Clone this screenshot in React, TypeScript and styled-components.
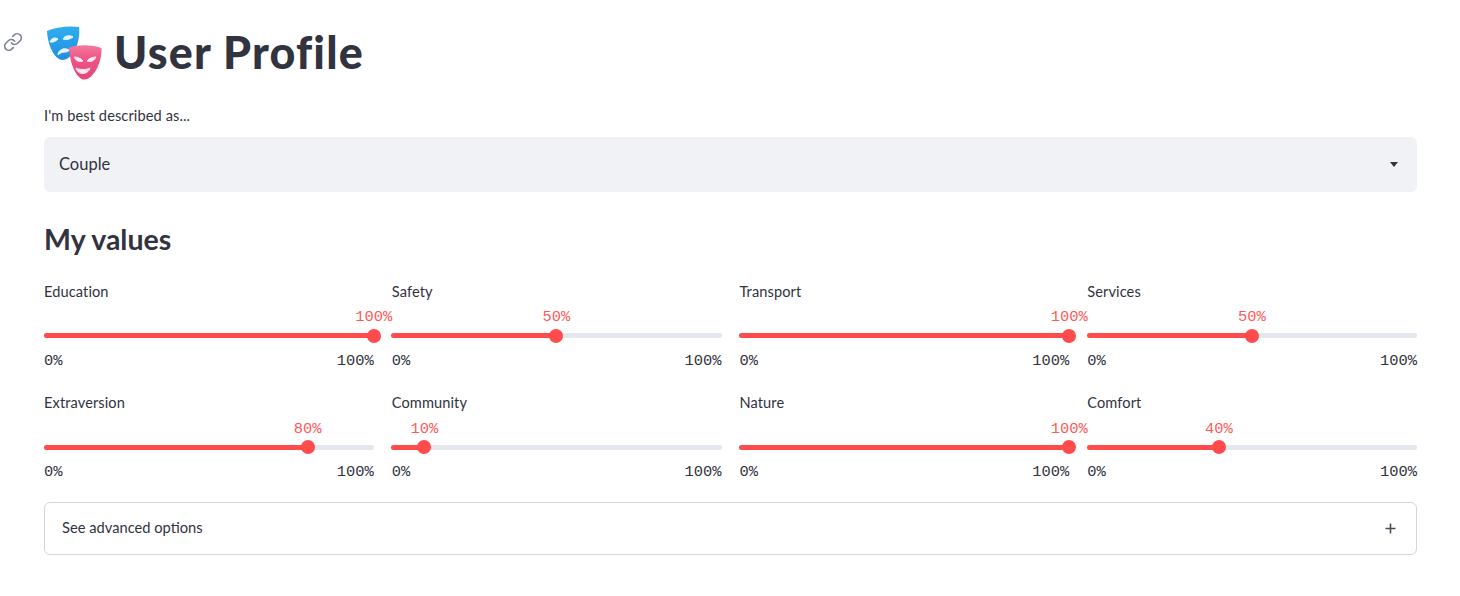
import * as React from "react";
import styled, { createGlobalStyle } from "styled-components";

const GlobalStyle = createGlobalStyle`
  html, body {
    margin: 0;
    padding: 0;
    background: #fff;
    color: #31333f;
    font-family: "Lato", "Noto Sans", sans-serif;
  }
`;

const Page = styled.main`
  position: relative;
  width: 1460px;
  height: 596px;
  box-sizing: border-box;
  padding: 20px 43px 0 44px;
  overflow: hidden;
`;

const TitleRow = styled.div`
  position: relative;
  display: flex;
  align-items: center;
  gap: 10px;
  height: 62px;
`;

const AnchorLink = styled.a`
  position: absolute;
  left: -41px;
  top: 12px;
  display: flex;
  color: #808495;
`;

const EmojiSlot = styled.span`
  display: flex;
  margin-top: 6px;
`;

const Title = styled.h1`
  margin: 2px 0 0;
  font-size: 44.8px;
  line-height: 62px;
  font-weight: 900;
  letter-spacing: 1.2px;
`;

const FieldLabel = styled.label`
  display: block;
  margin-top: 24px;
  height: 20px;
  font-size: 14.6px;
  line-height: 20px;
  letter-spacing: 0.1px;
`;

const SelectBox = styled.div`
  display: flex;
  align-items: center;
  justify-content: space-between;
  height: 55px;
  box-sizing: border-box;
  margin-top: 11px;
  padding: 0 19px 2px 15px;
  border-radius: 6px;
  background: #f0f2f6;
  font-size: 16.5px;
`;

const Caret = styled.span`
  width: 0;
  height: 0;
  margin-top: 2px;
  border-left: 4px solid transparent;
  border-right: 4px solid transparent;
  border-top: 5px solid #31333f;
`;

const SectionHeading = styled.h2`
  margin: 27px 0 0;
  height: 40px;
  font-size: 28.5px;
  line-height: 40px;
  font-weight: 700;
`;

const SliderGrid = styled.div`
  display: grid;
  grid-template-columns: repeat(4, 1fr);
  column-gap: 18px;
  row-gap: 21.4px;
  margin-top: 23px;
`;

const SliderCell = styled.div`
  height: 90px;
`;

const SliderLabel = styled.div`
  height: 20px;
  font-size: 14.6px;
  line-height: 20px;
  letter-spacing: 0.1px;
`;

const Track = styled.div`
  position: relative;
  height: 5px;
  margin: 31.2px 0 0 -0.5px;
  border-radius: 3px;
  background: #e4e7ee;
`;

const Fill = styled.div<{ $pct: number }>`
  height: 100%;
  width: ${(p) => p.$pct}%;
  border-radius: 3px;
  background: #ff4b4b;
`;

const Thumb = styled.div<{ $pct: number }>`
  position: absolute;
  left: ${(p) => p.$pct}%;
  top: 50%;
  width: 14px;
  height: 14px;
  border-radius: 50%;
  background: #ff4b4b;
  transform: translate(-50%, -50%);
`;

const ThumbValue = styled.div<{ $pct: number }>`
  position: absolute;
  left: ${(p) => p.$pct}%;
  bottom: 11px;
  transform: translateX(-50%);
  font-family: "Liberation Mono", monospace;
  font-size: 15.4px;
  line-height: 20px;
  color: #ff5a5a;
`;

const Range = styled.div`
  display: flex;
  justify-content: space-between;
  margin-top: 12.8px;
  font-family: "Liberation Mono", monospace;
  font-size: 15.4px;
  line-height: 20px;
`;

const Expander = styled.div`
  display: flex;
  align-items: center;
  justify-content: space-between;
  height: 53px;
  box-sizing: border-box;
  margin-top: 18.6px;
  padding: 0 20px 3px 17px;
  border: 1px solid rgba(49, 51, 63, 0.2);
  border-radius: 6px;
  font-size: 14.7px;
`;

const PlusSlot = styled.span`
  display: flex;
  margin-top: 3px;
`;

function MasksEmoji() {
  return (
    <svg width="60" height="60" viewBox="0 0 60 60" aria-hidden="true">
      <defs>
        <linearGradient id="blueMask" x1="0" y1="0" x2="0" y2="1">
          <stop offset="0" stopColor="#30adf0" />
          <stop offset="1" stopColor="#1f8fe0" />
        </linearGradient>
        <linearGradient id="pinkMask" x1="0" y1="0" x2="0" y2="1">
          <stop offset="0" stopColor="#f27a9c" />
          <stop offset="0.4" stopColor="#ef5487" />
          <stop offset="1" stopColor="#e94378" />
        </linearGradient>
      </defs>
      <path
        d="M3 7C12 3 25 1.5 35 3C36 12 34 22 29 29C25 35 20 37 16 35.5C8 32 3.5 18 3 7Z"
        fill="url(#blueMask)"
      />
      <g fill="#e6f5fe" stroke="#e6f5fe" strokeWidth="1" strokeLinejoin="round">
        <path d="M6 18C7 14 11 13 14 15C12 17.5 9 18.5 6 18Z" />
        <path d="M19 15C21 11 26 11 29 13C26 15.5 22 16 19 15Z" />
        <path d="M14 31C14 26 20 23 25 26C25 27.5 23 28 21 28C18 28 16 29 14 31Z" />
      </g>
      <path
        d="M25 23.5C35 20.5 48 20.5 57.5 24C58 34 54 46 47 52.5C43 56.5 38 56.5 35 53C29 47 25.5 35 25 23.5Z"
        fill="url(#pinkMask)"
      />
      <g fill="#fde8ef" stroke="#fde8ef" strokeWidth="1" strokeLinejoin="round">
        <path d="M30 33C33 33 37 34 39 37C35 38.5 31.5 36.5 30 33Z" />
        <path d="M43 37C45 34 49 33 52 33C50.5 36.5 47 38.5 43 37Z" />
        <path d="M32 44C36 46 42 46 46 44C45 48 41 49.5 39 49.5C36 49.5 33 48 32 44Z" />
      </g>
    </svg>
  );
}

function LinkIcon() {
  return (
    <svg
      width="20"
      height="20"
      viewBox="0 0 24 24"
      fill="none"
      stroke="currentColor"
      strokeWidth="2"
      strokeLinecap="round"
      strokeLinejoin="round"
      aria-hidden="true"
    >
      <path d="M10 13a5 5 0 0 0 7.54.54l3-3a5 5 0 0 0-7.07-7.07l-1.72 1.71" />
      <path d="M14 11a5 5 0 0 0-7.54-.54l-3 3a5 5 0 0 0 7.07 7.07l1.71-1.71" />
    </svg>
  );
}

function PlusIcon() {
  return (
    <svg width="11" height="11" viewBox="0 0 11 11" aria-hidden="true">
      <path d="M5.5 0.5v10M0.5 5.5h10" stroke="#4b4d5a" strokeWidth="1.6" />
    </svg>
  );
}

const sliders = [
  { label: "Education", value: 100 },
  { label: "Safety", value: 50 },
  { label: "Transport", value: 100 },
  { label: "Services", value: 50 },
  { label: "Extraversion", value: 80 },
  { label: "Community", value: 10 },
  { label: "Nature", value: 100 },
  { label: "Comfort", value: 40 },
];

function App() {
  return (
    <Page>
      <GlobalStyle />
      <TitleRow>
        <AnchorLink>
          <LinkIcon />
        </AnchorLink>
        <EmojiSlot>
          <MasksEmoji />
        </EmojiSlot>
        <Title>User Profile</Title>
      </TitleRow>

      <FieldLabel>I'm best described as...</FieldLabel>
      <SelectBox>
        Couple
        <Caret />
      </SelectBox>

      <SectionHeading>My values</SectionHeading>
      <SliderGrid>
        {sliders.map((s) => (
          <SliderCell key={s.label}>
            <SliderLabel>{s.label}</SliderLabel>
            <Track>
              <Fill $pct={s.value} />
              <Thumb $pct={s.value} />
              <ThumbValue $pct={s.value}>{s.value}%</ThumbValue>
            </Track>
            <Range>
              <span>0%</span>
              <span>100%</span>
            </Range>
          </SliderCell>
        ))}
      </SliderGrid>

      <Expander>
        See advanced options
        <PlusSlot>
          <PlusIcon />
        </PlusSlot>
      </Expander>
    </Page>
  );
}

export default App;
